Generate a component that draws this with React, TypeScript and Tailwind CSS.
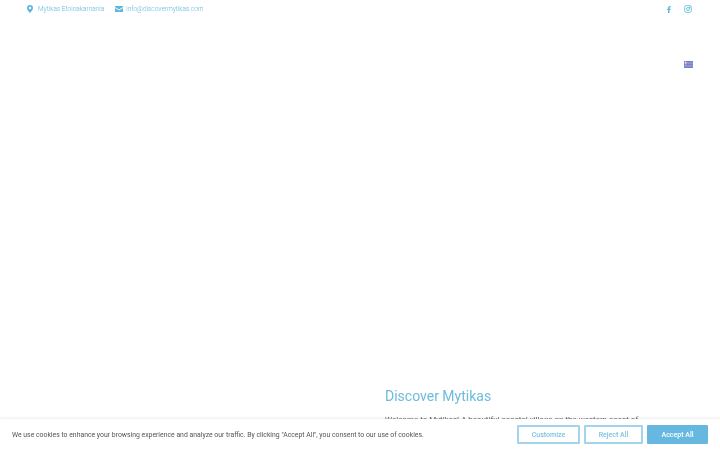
export default function App() {
  return (
    <div className="h-[450px] w-[720px] overflow-hidden bg-white font-['Roboto',sans-serif]">
      <header className="flex h-[18px] items-center justify-between pl-[27px] pr-[28px] text-[6.5px] font-light text-[#5fb6dc] will-change-transform">
        <div className="flex items-center">
          <svg width="6" height="8" viewBox="0 0 12 16" fill="#5fb6dc">
            <path fillRule="evenodd" d="M6 0a6 6 0 0 0-6 6c0 4 6 10 6 10s6-6 6-10a6 6 0 0 0-6-6zm0 3.5a2.5 2.5 0 1 1 0 5 2.5 2.5 0 0 1 0-5z" />
          </svg>
          <span className="ml-[5px] mt-[2px]">Mytikas Etoloakarnania</span>
          <svg width="8" height="6" viewBox="0 0 16 12" fill="#5fb6dc" className="ml-[11px]">
            <path d="M0 0h16v2L8 7 0 2zM0 4l8 5 8-5v8H0z" />
          </svg>
          <span className="ml-[3px] mt-[2px]">info@discovermytikas.com</span>
        </div>
        <div className="flex items-center gap-[13px]">
          <svg width="4" height="7" viewBox="0 0 320 512" fill="#5fb6dc" preserveAspectRatio="none">
            <path d="M80 299v213h116V299h87l18-97H196v-34c0-51 20-71 72-71 16 0 29 0 36 1V10C290 6 255 2 235 2 129 2 80 52 80 160v42H14v97z" />
          </svg>
          <svg width="8" height="8" viewBox="0 0 24 24" fill="none" stroke="#5fb6dc" strokeWidth="2.5">
            <rect x="2" y="2" width="20" height="20" rx="5" />
            <circle cx="12" cy="12" r="4.5" />
            <circle cx="17.5" cy="6.5" r="1" fill="#5fb6dc" />
          </svg>
        </div>
      </header>
      <div className="flex justify-end pr-[27px] pt-[43px]">
        <svg width="9" height="7" viewBox="0 0 9 7">
          <rect width="9" height="7" fill="#7b7fc8" />
          <rect y="1.5" width="9" height="1.3" fill="#9a9dd8" />
          <rect y="4.2" width="9" height="1.3" fill="#9a9dd8" />
          <rect width="3.6" height="3.8" fill="#6a6ebc" />
          <rect x="1.4" width="0.8" height="3.8" fill="#e6e6f6" />
          <rect y="1.5" width="3.6" height="0.8" fill="#e6e6f6" />
        </svg>
      </div>
      <main className="pl-[385px] pt-[319px] will-change-transform">
        <h1 className="whitespace-nowrap text-[14px] leading-[18px] text-[#6dbbdd]">Discover Mytikas</h1>
        <p className="mt-[8px] whitespace-nowrap text-[8px] leading-[14px] text-[#666]">
          Welcome to Mytikas! A beautiful coastal village on the western coast of
        </p>
      </main>
      <div className="fixed bottom-0 left-0 flex h-[31px] w-[720px] items-center justify-between bg-white pl-[12px] pr-[12px] shadow-[0_-1px_3px_rgba(0,0,0,0.08)]">
        <p className="mt-[2px] whitespace-nowrap text-[6.87px] text-[#555]">
          We use cookies to enhance your browsing experience and analyze our traffic. By clicking "Accept All", you consent to our use of cookies.
        </p>
        <div className="flex gap-[4px] text-[7px] font-medium">
          <button className="h-[19px] w-[63px] rounded-[1px] border-2 border-[#a3d4ea] pt-[1px] text-[#7cc2e2]">Customize</button>
          <button className="h-[19px] w-[59px] rounded-[1px] border-2 border-[#a3d4ea] pt-[1px] text-[#7cc2e2]">Reject All</button>
          <button className="h-[19px] w-[61px] rounded-[1px] bg-[#66b8e0] pt-[1px] text-white">Accept All</button>
        </div>
      </div>
    </div>
  );
}
